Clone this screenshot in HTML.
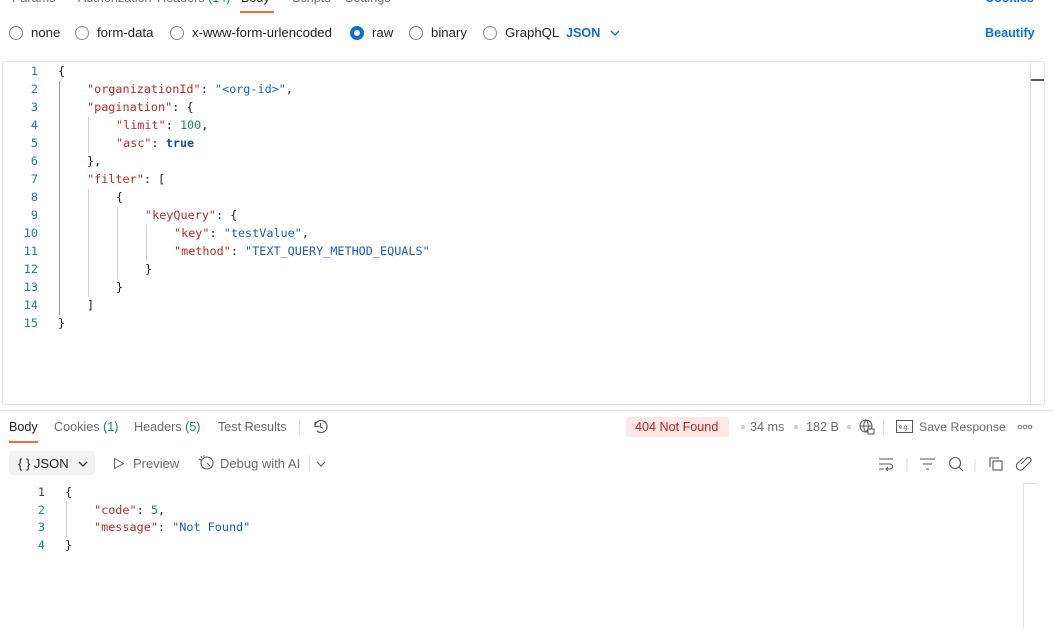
<!DOCTYPE html>
<html><head><meta charset="utf-8"><style>
*{margin:0;padding:0;box-sizing:border-box}
body{width:1053px;height:629px;overflow:hidden;background:#fff;font-family:"Liberation Sans",sans-serif;font-size:12.6px;color:#212121;position:relative}
.a{position:absolute;white-space:nowrap}
.mono{font-family:"DejaVu Sans Mono","Liberation Mono",monospace;font-size:11.8px}
.ln{position:absolute;width:40px;text-align:right;color:#1d7e9a}
.k{color:#b52a2a}.s{color:#1a5fb4}.n{color:#148a5c}.b{color:#0b4fa6;font-weight:bold}
.g{position:absolute;width:1px;background:#d0d0d0}
.rad{position:absolute;width:14px;height:14px;border:1px solid #8a8a8a;border-radius:50%;top:26px}
.gray{color:#6b6b6b}
.r{font-size:13.2px;top:25px}
</style></head><body>
<div class="a gray" style="top:-9px;left:12px">Params</div>
<div class="a gray" style="top:-9px;left:78px">Authorization</div>
<div class="a gray" style="top:-9px;left:157px">Headers <span style="color:#148a5c">(14)</span></div>
<div class="a" style="top:-9px;left:241px">Body</div>
<div class="a" style="top:11px;left:240px;width:34px;height:2px;background:#f26b3a"></div>
<div class="a gray" style="top:-9px;left:292px">Scripts</div>
<div class="a gray" style="top:-9px;left:345px">Settings</div>
<div class="a" style="top:-9px;left:985px;color:#0d6fd6;font-weight:bold">Cookies</div>

<div class="rad" style="left:9px"></div><div class="a r" style="left:31px">none</div>
<div class="rad" style="left:75px"></div><div class="a r" style="left:97px">form-data</div>
<div class="rad" style="left:170px"></div><div class="a r" style="left:192px">x-www-form-urlencoded</div>
<div class="rad" style="left:350px;border:4px solid #0d6fd6"></div><div class="a r" style="left:372px">raw</div>
<div class="rad" style="left:409px"></div><div class="a r" style="left:431px">binary</div>
<div class="rad" style="left:483px"></div><div class="a r" style="left:505px">GraphQL</div>
<div class="a" style="top:26px;left:566px;color:#0d6fd6;font-weight:bold">JSON</div>
<svg class="a" style="top:29px;left:610px" width="10" height="8"><path d="M1 2l4 4 4-4" fill="none" stroke="#0d6fd6" stroke-width="1.3"/></svg>
<div class="a" style="top:26px;left:985px;color:#0d6fd6;font-weight:bold">Beautify</div>

<div class="a" style="top:61px;left:2px;width:1043px;height:344px;border:1px solid #e2e2e2;border-radius:3px"></div>
<div class="a" style="top:61px;left:1030px;width:1px;height:344px;background:#e2e2e2"></div>
<div class="a" style="top:79px;left:1031px;width:13px;height:2px;background:#555"></div>

<div class="mono">
<div class="ln" style="top:64px;left:-2px">1</div><div class="ln" style="top:82px;left:-2px">2</div><div class="ln" style="top:100px;left:-2px">3</div><div class="ln" style="top:118px;left:-2px">4</div><div class="ln" style="top:136px;left:-2px">5</div><div class="ln" style="top:154px;left:-2px">6</div><div class="ln" style="top:172px;left:-2px">7</div><div class="ln" style="top:190px;left:-2px">8</div><div class="ln" style="top:208px;left:-2px">9</div><div class="ln" style="top:226px;left:-2px">10</div><div class="ln" style="top:244px;left:-2px">11</div><div class="ln" style="top:262px;left:-2px">12</div><div class="ln" style="top:280px;left:-2px">13</div><div class="ln" style="top:298px;left:-2px">14</div><div class="ln" style="top:316px;left:-2px">15</div>
<div class="g" style="left:59px;top:81px;height:234px;background:#999"></div>
<div class="g" style="left:88px;top:117px;height:36px"></div>
<div class="g" style="left:88px;top:189px;height:108px"></div>
<div class="g" style="left:117px;top:207px;height:72px"></div>
<div class="g" style="left:146px;top:225px;height:36px"></div>
<div class="a" style="top:64px;left:58px">{</div>
<div class="a" style="top:82px;left:87px"><span class="k">"organizationId"</span>: <span class="s">"&lt;org-id&gt;"</span>,</div>
<div class="a" style="top:100px;left:87px"><span class="k">"pagination"</span>: {</div>
<div class="a" style="top:118px;left:116px"><span class="k">"limit"</span>: <span class="n">100</span>,</div>
<div class="a" style="top:136px;left:116px"><span class="k">"asc"</span>: <span class="b">true</span></div>
<div class="a" style="top:154px;left:87px">},</div>
<div class="a" style="top:172px;left:87px"><span class="k">"filter"</span>: [</div>
<div class="a" style="top:190px;left:116px">{</div>
<div class="a" style="top:208px;left:145px"><span class="k">"keyQuery"</span>: {</div>
<div class="a" style="top:226px;left:174px"><span class="k">"key"</span>: <span class="s">"testValue"</span>,</div>
<div class="a" style="top:244px;left:174px"><span class="k">"method"</span>: <span class="s">"TEXT_QUERY_METHOD_EQUALS"</span></div>
<div class="a" style="top:262px;left:145px">}</div>
<div class="a" style="top:280px;left:116px">}</div>
<div class="a" style="top:298px;left:87px">]</div>
<div class="a" style="top:316px;left:58px">}</div>
</div>

<div class="a" style="top:410px;left:0;width:1053px;height:1px;background:#e6e6e6"></div>
<div class="a" style="top:420px;left:9px">Body</div>
<div class="a" style="top:441px;left:9px;width:29px;height:2px;background:#f26b3a"></div>
<div class="a gray" style="top:420px;left:54px">Cookies <span style="color:#148a5c">(1)</span></div>
<div class="a gray" style="top:420px;left:134px">Headers <span style="color:#148a5c">(5)</span></div>
<div class="a gray" style="top:420px;left:218px">Test Results</div>
<div class="a" style="top:419px;left:299px;width:1px;height:16px;background:#ddd"></div>
<svg class="a" style="top:418px;left:312px" width="17" height="17" viewBox="0 0 17 17"><path d="M3 8.5a6 6 0 1 1 1.8 4.3M3 4v4.5h4.5M8.5 5v4l2.5 1.5" fill="none" stroke="#555" stroke-width="1.2"/></svg>

<div class="a" style="top:417px;left:626px;width:103px;height:20px;background:#fde7e7;border-radius:3px"></div>
<div class="a" style="top:420px;left:635px;color:#b3261e">404 Not Found</div>
<div class="a" style="top:425px;left:741px;width:4px;height:4px;border-radius:50%;background:#ccc"></div>
<div class="a gray" style="top:420px;left:750px">34 ms</div>
<div class="a" style="top:425px;left:794px;width:4px;height:4px;border-radius:50%;background:#ccc"></div>
<div class="a gray" style="top:420px;left:806px">182 B</div>
<div class="a" style="top:425px;left:847px;width:4px;height:4px;border-radius:50%;background:#ccc"></div>
<svg class="a" style="top:418px;left:858px" width="18" height="18" viewBox="0 0 18 18"><circle cx="8" cy="8" r="6" fill="none" stroke="#555" stroke-width="1.1"/><path d="M2 8h12M8 2c-3 3-3 9 0 12M8 2c3 3 3 9 0 12" fill="none" stroke="#555" stroke-width="1"/><rect x="10" y="11" width="6" height="5" fill="#fff" stroke="#555"/></svg>
<div class="a" style="top:419px;left:883px;width:1px;height:16px;background:#ddd"></div>
<svg class="a" style="top:420px;left:896px" width="17" height="13"><rect x="0.5" y="0.5" width="16" height="12" fill="none" stroke="#555"/><text x="3" y="9" font-size="6" fill="#555" font-family="Liberation Sans">e.g.</text></svg>
<div class="a gray" style="top:420px;left:919px;font-size:12.3px">Save Response</div>
<svg class="a" style="top:424px;left:1017px" width="16" height="6"><g fill="none" stroke="#777"><circle cx="3" cy="3" r="1.8"/><circle cx="8" cy="3" r="1.8"/><circle cx="13" cy="3" r="1.8"/></g></svg>

<div class="a" style="top:451px;left:9px;width:86px;height:24px;background:#f2f2f2;border-radius:4px"></div>
<div class="a" style="top:456px;left:18px;font-size:13px">{ } JSON</div>
<svg class="a" style="top:460px;left:78px" width="10" height="8"><path d="M1 2l4 4 4-4" fill="none" stroke="#333" stroke-width="1.3"/></svg>
<svg class="a" style="top:457px;left:113px" width="12" height="13"><path d="M1.5 1.5l9 5-9 5z" fill="none" stroke="#666"/></svg>
<div class="a gray" style="top:456px;left:133px;font-size:13px">Preview</div>
<svg class="a" style="top:454px;left:198px" width="17" height="17" viewBox="0 0 17 17"><circle cx="9" cy="9" r="6" fill="none" stroke="#555" stroke-width="1.1"/><path d="M3 2l1 2M1 5l2 1M6 1l0 2M9 9l3 3" stroke="#555" fill="none"/></svg>
<div class="a gray" style="top:456px;left:220px;font-size:13px">Debug with AI</div>
<div class="a" style="top:455px;left:309px;width:1px;height:16px;background:#ddd"></div>
<svg class="a" style="top:460px;left:316px" width="10" height="8"><path d="M1 2l4 4 4-4" fill="none" stroke="#666" stroke-width="1.2"/></svg>

<svg class="a" style="top:455px;left:878px" width="160" height="17" viewBox="0 0 160 17">
<g fill="none" stroke="#555" stroke-width="1.1">
<path d="M1 4h14M1 9h11a2.5 2.5 0 0 1 0 5h-3M1 14h5M10 12l-2 2 2 2"/>
<path d="M29 4v13" stroke="#ddd"/>
<path d="M42 4h15M45 9h9M48 14h3"/>
<circle cx="77" cy="8" r="5.5"/><path d="M81 12l4 4"/>
<path d="M97 4v13" stroke="#ddd"/>
<rect x="115" y="6" width="9" height="9"/><path d="M112 12V3h9"/>
<path d="M143 9l6-6a2.5 2.5 0 0 1 3.5 3.5l-8 8a4 4 0 0 1-5.5-5.5l6-6"/>
</g></svg>

<div class="a" style="top:483px;left:1023px;width:14px;height:146px;border-left:1px solid #e2e2e2;border-top:1px solid #e2e2e2"></div>

<div class="mono">
<div class="ln" style="top:485px;left:5px;color:#1f3f8a">1</div><div class="ln" style="top:503px;left:5px">2</div><div class="ln" style="top:520px;left:5px">3</div><div class="ln" style="top:538px;left:5px">4</div>
<div class="g" style="left:66px;top:501px;height:36px"></div>
<div class="a" style="top:485px;left:65px">{</div>
<div class="a" style="top:503px;left:94px"><span class="k">"code"</span>: <span class="n">5</span>,</div>
<div class="a" style="top:520px;left:94px"><span class="k">"message"</span>: <span class="s">"Not Found"</span></div>
<div class="a" style="top:538px;left:65px">}</div>
</div>
</body></html>
